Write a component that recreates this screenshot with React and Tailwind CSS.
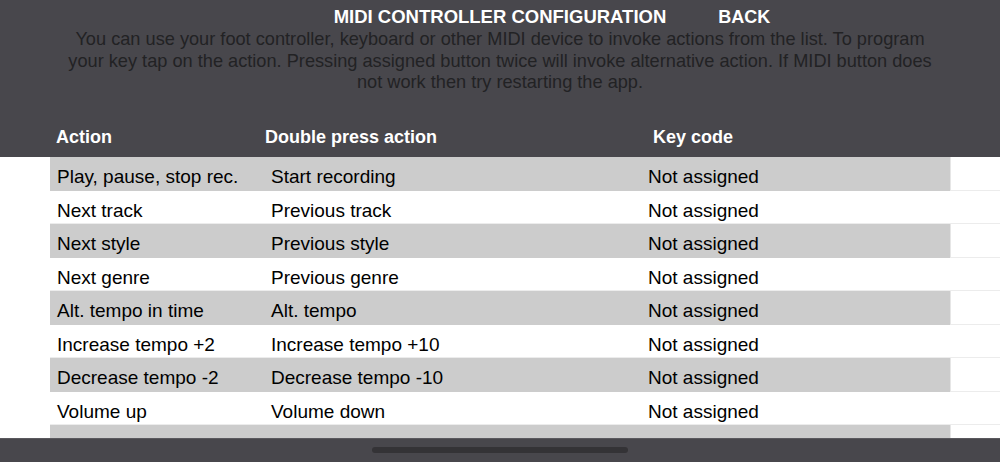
import React from 'react'

const ROWS = [
    ['Play, pause, stop rec.', 'Start recording'],
    ['Next track', 'Previous track'],
    ['Next style', 'Previous style'],
    ['Next genre', 'Previous genre'],
    ['Alt. tempo in time', 'Alt. tempo'],
    ['Increase tempo +2', 'Increase tempo +10'],
    ['Decrease tempo -2', 'Decrease tempo -10'],
    ['Volume up', 'Volume down'],
    ['Switch to track 1', ''],
]

function Row({ action, alt, shaded }) {
    return (
        <div className="flex h-[33.5px] shrink-0">
            <div className="w-[50px] shrink-0 bg-white"></div>
            <div className={`w-[900px] shrink-0 grid grid-cols-[214px_377px_1fr] items-center pl-[7px] pt-[6px] text-[19px] text-black ${shaded ? 'bg-[#cccccc]' : 'bg-white border-b border-[#ececec]'}`}>
                <span className="whitespace-nowrap">{action}</span>
                <span className="whitespace-nowrap">{alt}</span>
                <span className="whitespace-nowrap">Not assigned</span>
            </div>
            <div className={`flex-1 bg-white border-b border-[#ececec] ${shaded ? 'border-l border-l-[#e6e6e6]' : ''}`}></div>
        </div>
    )
}

export default function App() {
    return (
        <div className="w-[1000px] h-[462px] flex flex-col overflow-hidden bg-white font-['Liberation_Sans',Arial,sans-serif]">
            {/* header */}
            <div className="h-[157px] shrink-0 bg-[#48474c] flex flex-col pt-[6px]">
                <div className="grid grid-cols-[1fr_auto_1fr] items-center leading-[22px] font-bold text-white">
                    <div></div>
                    <div className="text-[18.5px] whitespace-nowrap">MIDI CONTROLLER CONFIGURATION</div>
                    <div className="pl-[52px] text-[18px]">BACK</div>
                </div>
                <p className="mt-[1px] text-center text-[18.2px] leading-[21.5px] text-[#222224] whitespace-nowrap">
                    You can use your foot controller, keyboard or other MIDI device to invoke actions from the list. To program<br />
                    your key tap on the action. Pressing assigned button twice will invoke alternative action. If MIDI button does<br />
                    not work then try restarting the app.
                </p>
                <div className="mt-[32px] grid grid-cols-[209px_388px_1fr] pl-[56px] text-[18px] leading-[22px] font-bold text-white">
                    <span>Action</span>
                    <span>Double press action</span>
                    <span>Key code</span>
                </div>
            </div>

            {/* list */}
            <div className="flex-1 flex flex-col overflow-hidden">
                {ROWS.map((r, i) => (
                    <Row key={i} action={r[0]} alt={r[1]} shaded={i % 2 === 0} />
                ))}
            </div>

            {/* home indicator bar */}
            <div className="h-[24px] shrink-0 bg-[#48474c] border-t border-[#5a595e] flex justify-center pt-[8px]">
                <div className="w-[256px] h-[6px] rounded-full bg-[#343336]"></div>
            </div>
        </div>
    )
}
